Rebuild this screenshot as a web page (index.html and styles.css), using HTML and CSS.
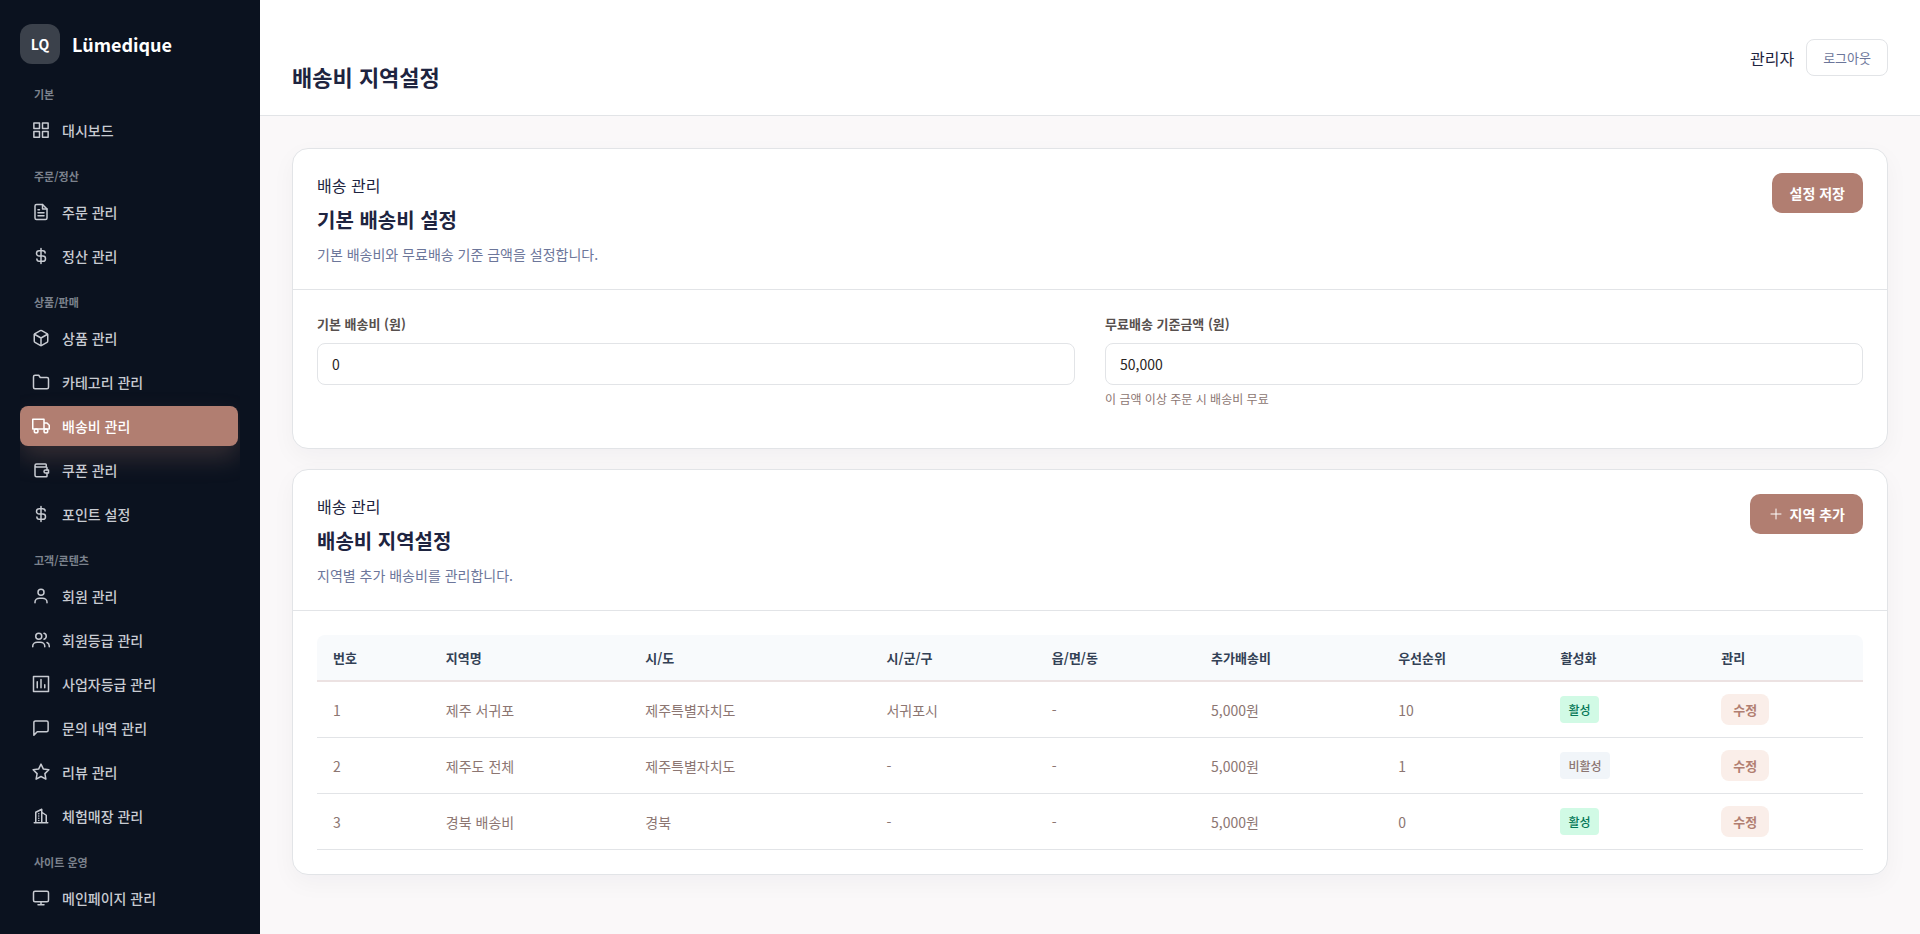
FILE: index.html
```html
<!DOCTYPE html>
<html lang="ko">
<head>
    <meta charset="UTF-8">
    <meta name="viewport" content="width=device-width, initial-scale=1.0">
    <title>배송비 지역설정 - Lümedique</title>

    <link rel="stylesheet" href="styles.css">
</head>
<body>
    <div class="layout">
        <aside class="sidebar">
            <div class="brand">
                <span class="brand-logo">LQ</span>
                <span class="brand-name">Lümedique</span>
            </div>

            <nav class="menu">
                <div class="menu-title">기본</div>
                <a class="menu-item" href="#">
                    <svg viewBox="0 0 24 24"><path d="M2.500 2.500H10V10H2.500zM14 2.500h7.500V10H14zM2.500 14H10v7.500H2.500zM14 14h7.500v7.500H14z"/></svg>
                    대시보드
                </a>

                <div class="menu-title">주문/정산</div>
                <a class="menu-item" href="#">
                    <svg viewBox="0 0 24 24"><path d="M14 2H6a2 2 0 0 0-2 2v16a2 2 0 0 0 2 2h12a2 2 0 0 0 2-2V8z"/><path d="M14 2v6h6M16 13H8M16 17H8M10 9H8"/></svg>
                    주문 관리
                </a>
                <a class="menu-item" href="#">
                    <svg viewBox="0 0 24 24"><path d="M12 2v20M17.500 8a3 3 0 0 0-3-3H9.500a3.500 3.500 0 0 0 0 7h5a3.500 3.500 0 0 1 0 7h-5a3 3 0 0 1-3-3"/></svg>
                    정산 관리
                </a>

                <div class="menu-title">상품/판매</div>
                <a class="menu-item" href="#">
                    <svg viewBox="0 0 24 24"><path d="M21 16V8a2 2 0 0 0-1-1.730l-7-4a2 2 0 0 0-2 0l-7 4A2 2 0 0 0 3 8v8a2 2 0 0 0 1 1.730l7 4a2 2 0 0 0 2 0l7-4A2 2 0 0 0 21 16z"/><path d="M3.300 7l8.700 5 8.700-5M12 22V12"/></svg>
                    상품 관리
                </a>
                <a class="menu-item" href="#">
                    <svg viewBox="0 0 24 24"><path d="M22 19a2 2 0 0 1-2 2H4a2 2 0 0 1-2-2V5a2 2 0 0 1 2-2h5l2 3h9a2 2 0 0 1 2 2z"/></svg>
                    카테고리 관리
                </a>
                <a class="menu-item active" href="#">
                    <svg viewBox="0 0 24 24"><path d="M1 3h15v13H1zM16 8h4l3 3v5h-7z"/><circle cx="5.500" cy="18.500" r="2.500"/><circle cx="18.500" cy="18.500" r="2.500"/></svg>
                    배송비 관리
                </a>
                <a class="menu-item" href="#">
                    <svg viewBox="0 0 24 24"><path d="M19 7V5a1 1 0 0 0-1-1H6a2 2 0 0 0-2 2 2 2 0 0 0 2 2h13a1 1 0 0 1 1 1v3M20 16v4a1 1 0 0 1-1 1H6a2 2 0 0 1-2-2V6"/><path d="M22 12v4h-4a2 2 0 0 1 0-4z"/></svg>
                    쿠폰 관리
                </a>
                <a class="menu-item" href="#">
                    <svg viewBox="0 0 24 24"><path d="M12 2v20M17.500 8a3 3 0 0 0-3-3H9.500a3.500 3.500 0 0 0 0 7h5a3.500 3.500 0 0 1 0 7h-5a3 3 0 0 1-3-3"/></svg>
                    포인트 설정
                </a>

                <div class="menu-title">고객/콘텐츠</div>
                <a class="menu-item" href="#">
                    <svg viewBox="0 0 24 24"><path d="M4 21v-1a6 5 0 0 1 6-5h4a6 5 0 0 1 6 5v1"/><circle cx="12" cy="7" r="4"/></svg>
                    회원 관리
                </a>
                <a class="menu-item" href="#">
                    <svg viewBox="0 0 24 24"><path d="M17 21v-1a6 5 0 0 0-6-5H7a6 5 0 0 0-6 5v1"/><circle cx="9" cy="7" r="4"/><path d="M23 21v-1a5 5 0 0 0-3-4.600M16 3.130a4 4 0 0 1 0 7.750"/></svg>
                    회원등급 관리
                </a>
                <a class="menu-item" href="#">
                    <svg viewBox="0 0 24 24"><path d="M2 2h20v20H2zM7 9v8M12 6v11M17 13v4"/></svg>
                    사업자등급 관리
                </a>
                <a class="menu-item" href="#">
                    <svg viewBox="0 0 24 24"><path d="M21.500 15a2 2 0 0 1-2 2H7l-4.500 4.500V4.500a2 2 0 0 1 2-2h15a2 2 0 0 1 2 2z"/></svg>
                    문의 내역 관리
                </a>
                <a class="menu-item" href="#">
                    <svg viewBox="0 0 24 24"><path d="M12 1.500l3.200 6.600 7.300 1-5.300 5.100 1.300 7.300L12 18l-6.500 3.500 1.300-7.300L1.500 9.100l7.300-1z"/></svg>
                    리뷰 관리
                </a>
                <a class="menu-item" href="#">
                    <svg viewBox="0 0 24 24"><path d="M3 21h18M5 21V7l8-4v18M19 21V11l-6-4M9 9v.010M9 12v.010M9 15v.010M9 18v.010"/></svg>
                    체험매장 관리
                </a>

                <div class="menu-title">사이트 운영</div>
                <a class="menu-item" href="#">
                    <svg viewBox="0 0 24 24"><rect x="2" y="3" width="20" height="14" rx="2"/><path d="M8 21h8M12 17v4"/></svg>
                    메인페이지 관리
                </a>
            </nav>
        </aside>

        <div class="main">
            <header class="topbar">
                <h1>배송비 지역설정</h1>
                <div class="user">
                    <span>관리자</span>
                    <button type="button" class="btn-logout">로그아웃</button>
                </div>
            </header>

            <main class="content">
                <section class="card">
                    <div class="card-header">
                        <div>
                            <div class="card-category">배송 관리</div>
                            <h2>기본 배송비 설정</h2>
                            <p>기본 배송비와 무료배송 기준 금액을 설정합니다.</p>
                        </div>
                        <button type="submit" form="fee-form" class="btn">설정 저장</button>
                    </div>
                    <form id="fee-form" class="card-body form-row">
                        <div class="form-group">
                            <label for="base-fee">기본 배송비 (원)</label>
                            <input type="text" id="base-fee" value="0">
                        </div>
                        <div class="form-group">
                            <label for="free-amount">무료배송 기준금액 (원)</label>
                            <input type="text" id="free-amount" value="50,000">
                            <small>이 금액 이상 주문 시 배송비 무료</small>
                        </div>
                    </form>
                </section>

                <section class="card">
                    <div class="card-header">
                        <div>
                            <div class="card-category">배송 관리</div>
                            <h2>배송비 지역설정</h2>
                            <p>지역별 추가 배송비를 관리합니다.</p>
                        </div>
                        <button type="button" class="btn">
                            <svg viewBox="0 0 16 16"><path d="M8 3v10M3 8h10"/></svg>
                            지역 추가
                        </button>
                    </div>
                    <div class="card-body">
                        <table>
                            <colgroup>
                                <col class="col-no">
                                <col class="col-name">
                                <col class="col-sido">
                                <col class="col-gugun">
                                <col class="col-dong">
                                <col class="col-fee">
                                <col class="col-order">
                                <col class="col-status">
                                <col class="col-manage">
                            </colgroup>
                            <thead>
                                <tr>
                                    <th>번호</th>
                                    <th>지역명</th>
                                    <th>시/도</th>
                                    <th>시/군/구</th>
                                    <th>읍/면/동</th>
                                    <th>추가배송비</th>
                                    <th>우선순위</th>
                                    <th>활성화</th>
                                    <th>관리</th>
                                </tr>
                            </thead>
                            <tbody>
                                <tr>
                                    <td>1</td>
                                    <td>제주 서귀포</td>
                                    <td>제주특별자치도</td>
                                    <td>서귀포시</td>
                                    <td>-</td>
                                    <td>5,000원</td>
                                    <td>10</td>
                                    <td><span class="badge on">활성</span></td>
                                    <td><button type="button" class="btn-edit">수정</button></td>
                                </tr>
                                <tr>
                                    <td>2</td>
                                    <td>제주도 전체</td>
                                    <td>제주특별자치도</td>
                                    <td>-</td>
                                    <td>-</td>
                                    <td>5,000원</td>
                                    <td>1</td>
                                    <td><span class="badge off">비활성</span></td>
                                    <td><button type="button" class="btn-edit">수정</button></td>
                                </tr>
                                <tr>
                                    <td>3</td>
                                    <td>경북 배송비</td>
                                    <td>경북</td>
                                    <td>-</td>
                                    <td>-</td>
                                    <td>5,000원</td>
                                    <td>0</td>
                                    <td><span class="badge on">활성</span></td>
                                    <td><button type="button" class="btn-edit">수정</button></td>
                                </tr>
                            </tbody>
                        </table>
                    </div>
                </section>
            </main>
        </div>
    </div>
</body>
</html>
```
FILE: styles.css
```css
:root {
    --primary-color: #b17e71;
    --sidebar-color: #0b121f;
    --border-color: #e2e4e7;
    --title-color: #1e2440;
    --muted-color: #6c769a;
    --cell-color: #8c7672;
}

* {
    box-sizing: border-box;
}

body {
    margin: 0;
    background-color: #faf8f9;
    color: var(--title-color);
    font-family: "Noto Sans CJK KR", sans-serif;
    font-size: 16px;
    line-height: 24px;
}

h1, h2, p {
    margin: 0;
}

button, input {
    font-family: inherit;
}

button {
    cursor: pointer;
}

svg {
    flex: none;
    fill: none;
    stroke: currentColor;
    stroke-linecap: round;
    stroke-linejoin: round;
}

.layout {
    display: flex;
    height: 100vh;
}

/* 사이드바 */
.sidebar {
    flex: none;
    width: 260px;
    padding: 24px 20px;
    overflow: hidden;
    background-color: var(--sidebar-color);
}

.brand {
    display: flex;
    align-items: center;
    gap: 12px;
    margin-bottom: 8px;
    color: white;
    font-weight: 700;
}

.brand-logo {
    display: flex;
    align-items: center;
    justify-content: center;
    width: 40px;
    height: 40px;
    border-radius: 12px;
    background-color: #3b414b;
    font-size: 14px;
}

.brand-name {
    font-size: 18px;
}

.menu {
    display: flex;
    flex-direction: column;
    gap: 4px;
    padding-right: 2px;
    overflow: hidden;
}

.menu-title {
    padding: 14px 14px 4px;
    color: #7c828d;
    font-size: 11px;
    font-weight: 700;
    line-height: 16px;
}

.menu-item {
    display: flex;
    align-items: center;
    gap: 12px;
    height: 40px;
    padding: 0 12px;
    border-radius: 8px;
    color: #c8cbd2;
    font-size: 14px;
    font-weight: 500;
    text-decoration: none;
}

.menu-item svg {
    width: 18px;
    height: 18px;
    stroke-width: 2;
}

.menu-item.active {
    background-color: var(--primary-color);
    box-shadow: 0 12px 24px rgba(177, 126, 113, 0.25);
    color: white;
}

/* 상단 */
.main {
    flex: 1;
    min-width: 0;
    overflow: auto;
}

.topbar {
    display: flex;
    align-items: center;
    justify-content: space-between;
    padding: 20px 32px;
    border-bottom: 1px solid var(--border-color);
    background-color: white;
}

.topbar h1 {
    padding: 40px 0 3px;
    font-size: 22px;
    line-height: 32px;
}

.user {
    display: flex;
    align-items: center;
    gap: 12px;
}

.btn-logout {
    height: 37px;
    padding: 0 16px;
    border: 1px solid var(--border-color);
    border-radius: 8px;
    background-color: white;
    color: var(--muted-color);
    font-size: 13px;
}

/* 카드 */
.content {
    display: flex;
    flex-direction: column;
    gap: 20px;
    padding: 32px;
}

.card {
    border: 1px solid var(--border-color);
    border-radius: 16px;
    background-color: white;
    box-shadow: 0 8px 24px rgba(15, 23, 42, 0.04);
}

.card-header {
    display: flex;
    align-items: flex-start;
    justify-content: space-between;
    padding: 24px;
    border-bottom: 1px solid var(--border-color);
}

.card-header h2 {
    margin: 9px 0;
    font-size: 20px;
    line-height: 28px;
}

.card-header p {
    color: var(--muted-color);
    font-size: 14px;
    line-height: 22px;
}

.card-body {
    padding: 24px;
}

.btn {
    display: flex;
    align-items: center;
    gap: 6px;
    height: 40px;
    padding: 0 18px;
    border: none;
    border-radius: 10px;
    background-color: var(--primary-color);
    color: white;
    font-size: 14px;
    font-weight: 700;
}

.btn svg {
    width: 16px;
    height: 16px;
}

.form-row {
    display: grid;
    grid-template-columns: 1fr 1fr;
    gap: 30px;
}

.form-group {
    margin-bottom: 16px;
}

.form-group label {
    display: block;
    margin-bottom: 10px;
    color: #57504e;
    font-size: 13px;
    font-weight: 700;
    line-height: 19px;
}

.form-group input {
    display: block;
    width: 100%;
    height: 42px;
    padding: 0 14px;
    border: 1px solid var(--border-color);
    border-radius: 8px;
    background-color: white;
    color: #292524;
    font-size: 14px;
}

.form-group small {
    display: block;
    margin-top: 5px;
    color: var(--cell-color);
    font-size: 12px;
    line-height: 18px;
}

/* 지역 목록 */
table {
    width: 100%;
    table-layout: fixed;
    border-collapse: separate;
    border-spacing: 0;
}

.col-no {
    width: 7.3%;
}

.col-name {
    width: 12.9%;
}

.col-sido {
    width: 15.6%;
}

.col-gugun {
    width: 10.7%;
}

.col-dong {
    width: 10.3%;
}

.col-fee {
    width: 12.1%;
}

.col-order {
    width: 10.5%;
}

.col-status {
    width: 10.4%;
}

.col-manage {
    width: 10.2%;
}

th {
    height: 47px;
    padding: 0 16px;
    border-bottom: 2px solid #ece2e2;
    background-color: #f8fafc;
    color: #334155;
    font-size: 13px;
    font-weight: 700;
    text-align: left;
}

th:first-child {
    border-top-left-radius: 8px;
}

th:last-child {
    border-top-right-radius: 8px;
}

td {
    height: 56px;
    padding: 0 16px;
    border-bottom: 1px solid var(--border-color);
    color: var(--cell-color);
    font-size: 14px;
}

.badge {
    display: inline-block;
    padding: 0 8px;
    border-radius: 4px;
    font-size: 12px;
    font-weight: 500;
    line-height: 27px;
}

.badge.on {
    background-color: #d1fae5;
    color: #047857;
}

.badge.off {
    background-color: #f1f5f9;
    color: var(--cell-color);
}

.btn-edit {
    display: block;
    height: 31px;
    padding: 0 12px;
    border: none;
    border-radius: 8px;
    background-color: #faeee9;
    color: var(--primary-color);
    font-size: 13px;
    font-weight: 700;
}
```
